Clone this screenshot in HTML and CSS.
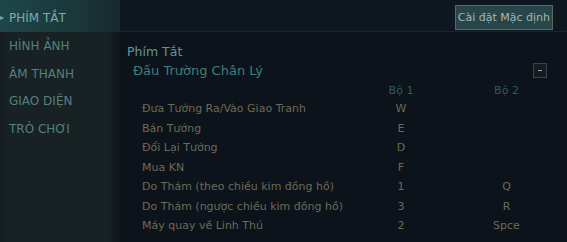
FILE: index.html
```html
<!DOCTYPE html>
<html lang="vi">
<head>
  <meta charset="UTF-8" />
  <title>Cài đặt</title>
  <link rel="stylesheet" href="styles.css">
</head>
<body>
  <div class="app">
    <nav class="sidebar">
      <div class="nav-item active"><span class="arrow">&#9656;</span>PHÍM TẮT</div>
      <div class="nav-item">HÌNH ẢNH</div>
      <div class="nav-item">ÂM THANH</div>
      <div class="nav-item">GIAO DIỆN</div>
      <div class="nav-item">TRÒ CHƠI</div>
    </nav>

    <main class="content">
      <div class="topbar">
        <button class="reset-btn">Cài đặt Mặc định</button>
      </div>

      <h2 class="section-title">Phím Tắt</h2>
      <div class="group-head">
        <span class="group-title">Đấu Trường Chân Lý</span>
        <span class="collapse-btn"></span>
      </div>

      <table class="keys">
        <thead>
          <tr>
            <th></th>
            <th>Bộ 1</th>
            <th>Bộ 2</th>
          </tr>
        </thead>
        <tbody>
          <tr><td>Đưa Tướng Ra/Vào Giao Tranh</td><td>W</td><td></td></tr>
          <tr><td>Bán Tướng</td><td>E</td><td></td></tr>
          <tr><td>Đổi Lại Tướng</td><td>D</td><td></td></tr>
          <tr><td>Mua KN</td><td>F</td><td></td></tr>
          <tr><td>Do Thám (theo chiều kim đồng hồ)</td><td>1</td><td>Q</td></tr>
          <tr><td>Do Thám (ngược chiều kim đồng hồ)</td><td>3</td><td>R</td></tr>
          <tr><td>Máy quay về Linh Thú</td><td>2</td><td>Spce</td></tr>
        </tbody>
      </table>
    </main>
  </div>
</body>
</html>
```

FILE: styles.css
```css
body {
  margin: 0;
  background-color: #0d141c;
  font-family: "DejaVu Sans", Verdana, sans-serif;
  overflow: hidden;
}

.app {
  display: flex;
  height: 242px;
}

.sidebar {
  width: 120px;
  flex-shrink: 0;
  background: linear-gradient(to right, #141c20 0%, #182225 6%, #182225 88%, #0f171b 100%);
}

.nav-item {
  height: 27.6px;
  line-height: 28px;
  padding-left: 9px;
  font-size: 12px;
  color: #55807f;
  position: relative;
}

.nav-item.active {
  background: linear-gradient(to right, #1f4649 0%, #1b383b 60%, #172a2e 100%);
  color: #78aeae;
  height: 32px;
  line-height: 36px;
}

.arrow {
  position: absolute;
  left: 0;
  font-size: 8px;
  color: #6fb0b0;
}

.content {
  flex: 1;
  display: flex;
  flex-direction: column;
  background-color: #0c131b;
}

.topbar {
  height: 32px;
  background-color: #0f1820;
  border-bottom: 1px solid #1a252c;
  display: flex;
  justify-content: flex-end;
  align-items: flex-start;
  padding-right: 14px;
  box-sizing: border-box;
}

.reset-btn {
  margin-top: 5px;
  height: 25px;
  padding: 0 2px;
  background-color: #274649;
  border: 1px solid #5b685d;
  color: #aab4ae;
  font-family: "DejaVu Sans", Verdana, sans-serif;
  font-size: 11px;
}

.section-title {
  margin: 12px 0 0 7px;
  font-size: 12.5px;
  font-weight: normal;
  color: #5e9896;
}

.group-head {
  display: flex;
  justify-content: space-between;
  align-items: center;
  margin: 3px 20px 0 13px;
  height: 17px;
}

.group-title {
  font-size: 13px;
  color: #3f7f7a;
}

.collapse-btn {
  width: 12px;
  height: 13px;
  border: 1px solid #3a4448;
  background-color: #141c22;
  position: relative;
}

.collapse-btn::after {
  content: "";
  position: absolute;
  left: 4px;
  top: 6px;
  width: 4px;
  height: 1px;
  background-color: #a0a8a8;
}

.keys {
  margin: 2px 0 0 15px;
  width: 424px;
  border-collapse: collapse;
  font-size: 11px;
}

.keys th {
  height: 18px;
  padding: 0;
  font-weight: normal;
  color: #2f5b5e;
  text-align: center;
}

.keys td {
  height: 19.5px;
  padding: 0;
  color: #6d6a57;
  text-align: center;
}

.keys td:first-child,
.keys th:first-child {
  text-align: left;
  padding-left: 7px;
  width: 206px;
}

.keys td:nth-child(2),
.keys th:nth-child(2) {
  width: 106px;
}
```
